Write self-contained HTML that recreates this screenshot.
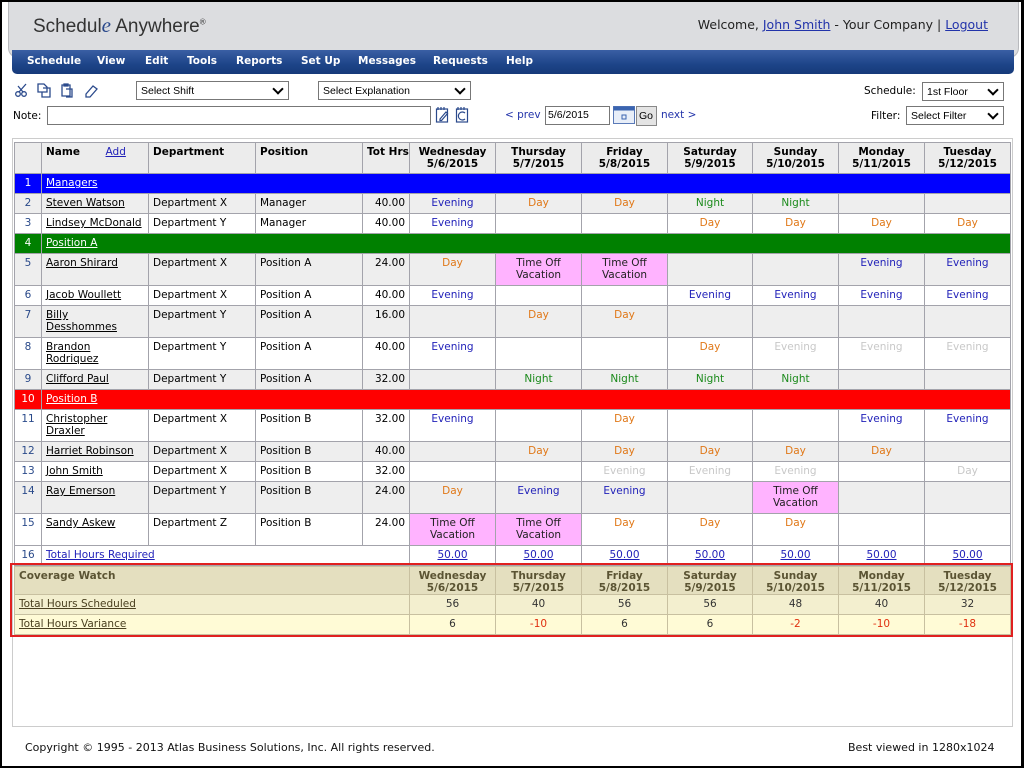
<!DOCTYPE html>
<html><head><meta charset="utf-8"><style>
*{box-sizing:border-box;margin:0;padding:0}
body{width:1024px;height:768px;background:#000;position:relative;overflow:hidden;font-family:"DejaVu Sans","Liberation Sans",sans-serif;font-size:10px;color:#000}
#page{position:absolute;left:2px;top:2px;width:1019px;height:764px;background:#fff}
#hdr{position:absolute;left:6px;top:0;width:1011px;height:56px;background:#dcdde0;border-radius:0 0 10px 10px;border:1px solid #b8b9bd;border-top:none}
#logo{position:absolute;left:24px;top:11px;font-family:"Liberation Sans",sans-serif;font-size:19px;color:#333}
#logo i{font-family:"Liberation Serif",serif;color:#2b4a8c;font-size:21px}
#logo sup{font-size:8px}
#welcome{position:absolute;right:30px;top:15px;font-family:"DejaVu Sans",sans-serif;font-size:12.5px;color:#222}
#welcome a{color:#2233aa}
#menu{position:absolute;left:10px;top:48px;width:1002px;height:24px;background:linear-gradient(#3a5fa4,#1d4488 60%,#163a7a);border-radius:0 0 5px 5px}
#menu span{position:absolute;top:5px;color:#fff;font-weight:bold;font-size:10.5px}
.sel{position:absolute;height:19px;border:1px solid #777;background:#fff;font-family:"Liberation Sans",sans-serif;font-size:10.5px;padding:3px 4px}
.sel.dd:after{content:"";position:absolute;right:6px;top:3px;width:6px;height:6px;border-right:2px solid #000;border-bottom:2px solid #000;transform:rotate(45deg)}
.lbl{position:absolute;font-size:10.5px}
a{color:#000;text-decoration:underline}
#grid{position:absolute;left:10px;top:136px;width:1001px;height:589px;border:1px solid #ccc}
table{border-collapse:collapse;table-layout:fixed;position:absolute}
td{border:1px solid #a3a3ab;vertical-align:top;padding:3px 4px 0;font-size:10.5px;line-height:12px;overflow:hidden;white-space:nowrap}
.g td{background:#eee}
.w td{background:#fff}
.n{color:#2a4a8a;text-align:center}
.r{text-align:right}
.c{text-align:center}
.hd td{background:#ececec;font-weight:bold}
.E{color:#1f1fb8}.D{color:#e07818}.N{color:#1b8a1b}.L{color:#c8c8c8}
.to{background:#ffb3ff!important;color:#222;text-align:center;white-space:normal}
.grp td{color:#fff}
.grp a{color:#fff}
.bl td{background:#0000ff}.gr td{background:#008000}.rd td{background:#ff0000}
.lk{color:#1f1fb8}
#cov td{border:1px solid #c8c0a0}
.ch td{background:#e4dfbf;color:#5b5433;font-weight:bold}
.c1 td{background:#f3efcf;color:#333}
.c2 td{background:#fffbd6;color:#333}
.neg{color:#e03010!important}
.c1 a,.c2 a{color:#4a4020}
.foot{position:absolute;top:739px;font-size:11px;color:#111}
</style></head><body><div id="page">
<div id="hdr"><div id="logo">Schedul<i>e</i> Anywhere<sup>®</sup></div>
<div id="welcome">Welcome, <a>John Smith</a> - Your Company | <a>Logout</a></div></div>
<div id="menu"><span style="left:15px">Schedule</span><span style="left:85px">View</span><span style="left:133px">Edit</span><span style="left:175px">Tools</span><span style="left:224px">Reports</span><span style="left:289px">Set Up</span><span style="left:346px">Messages</span><span style="left:421px">Requests</span><span style="left:494px">Help</span></div>
<svg style="position:absolute;left:12px;top:80px" width="90" height="16" viewBox="0 0 90 16" fill="none" stroke="#2b4a8c" stroke-width="1.3"><circle cx="4" cy="12" r="2.3"/><circle cx="10" cy="12" r="2.3"/><path d="M5 10 L12 2 M9 10 L4 4"/><path d="M24 2h6l3 3v5h-9zM29 6h7v9h-8v-5"/><path d="M48 3h8v11h-8zM50 2h4v2h-4zM52 7h6v8h-6"/><path d="M72 12l7-8 4 3-7 8h-4z"/></svg>
<div class="sel dd" style="left:134px;top:79px;width:153px">Select Shift</div>
<div class="sel dd" style="left:316px;top:79px;width:153px">Select Explanation</div>
<div class="lbl" style="left:11px;top:108px">Note:</div>
<div class="sel" style="left:45px;top:104px;width:384px;height:19px"></div>
<svg style="position:absolute;left:433px;top:104px" width="36" height="18" viewBox="0 0 36 18" fill="none" stroke="#2b4a8c" stroke-width="1.2"><rect x="1.5" y="3" width="11" height="13"/><path d="M3 1v3M6 1v3M9 1v3M5 13l6-7 1.5 1.5-6 7H5z"/><rect x="21.5" y="3" width="11" height="13"/><path d="M23 1v3M26 1v3M29 1v3M30 7a4 4 0 1 0 0 6"/></svg>
<div class="lbl" style="left:503px;top:107px;color:#2233aa">&lt; prev</div>
<div class="sel" style="left:543px;top:104px;width:65px;padding:2px 2px">5/6/2015</div>
<svg style="position:absolute;left:611px;top:104px" width="22" height="18" viewBox="0 0 22 18"><rect x="0.5" y="0.5" width="21" height="17" fill="#e8eef8" stroke="#5a7ab8"/><rect x="0.5" y="0.5" width="21" height="4" fill="#3a64b0"/><rect x="9" y="9" width="4" height="4" fill="none" stroke="#3a64b0"/></svg>
<div style="position:absolute;left:634px;top:104px;width:21px;height:20px;border:1px solid #888;background:#e4e4e4;font-family:'Liberation Sans';font-size:10.5px;padding:3px 2px">Go</div>
<div class="lbl" style="left:659px;top:107px;color:#2233aa">next &gt;</div>
<div class="lbl" style="left:862px;top:83px">Schedule:</div>
<div class="sel dd" style="left:920px;top:80px;width:82px">1st Floor</div>
<div class="lbl" style="left:869px;top:108px">Filter:</div>
<div class="sel dd" style="left:904px;top:104px;width:98px">Select Filter</div>
<div id="grid">
<table style="left:1px;top:3px;width:996px">
<colgroup><col style="width:27px"><col style="width:107px"><col style="width:107px"><col style="width:107px"><col style="width:47px"><col style="width:86px"><col style="width:86px"><col style="width:86px"><col style="width:85px"><col style="width:86px"><col style="width:86px"><col style="width:86px"></colgroup>
<tr class="hd" style="height:31px"><td></td><td>Name &nbsp;&nbsp;&nbsp;&nbsp;&nbsp;&nbsp;<a class="lk" style="font-weight:normal">Add</a></td><td>Department</td><td>Position</td><td>Tot Hrs</td><td class="c">Wednesday<br>5/6/2015</td><td class="c">Thursday<br>5/7/2015</td><td class="c">Friday<br>5/8/2015</td><td class="c">Saturday<br>5/9/2015</td><td class="c">Sunday<br>5/10/2015</td><td class="c">Monday<br>5/11/2015</td><td class="c">Tuesday<br>5/12/2015</td></tr>
<tr class="grp bl" style="height:20px"><td class="c">1</td><td colspan="11"><a>Managers</a></td></tr>
<tr class="g" style="height:20px"><td class="n">2</td><td><a>Steven Watson</a></td><td>Department X</td><td>Manager</td><td class="r">40.00</td><td class="c E">Evening</td><td class="c D">Day</td><td class="c D">Day</td><td class="c N">Night</td><td class="c N">Night</td><td></td><td></td></tr>
<tr class="w" style="height:20px"><td class="n">3</td><td><a>Lindsey McDonald</a></td><td>Department Y</td><td>Manager</td><td class="r">40.00</td><td class="c E">Evening</td><td></td><td></td><td class="c D">Day</td><td class="c D">Day</td><td class="c D">Day</td><td class="c D">Day</td></tr>
<tr class="grp gr" style="height:20px"><td class="c">4</td><td colspan="11"><a>Position A</a></td></tr>
<tr class="g" style="height:32px"><td class="n">5</td><td><a>Aaron Shirard</a></td><td>Department X</td><td>Position A</td><td class="r">24.00</td><td class="c D">Day</td><td class="to">Time Off<br>Vacation</td><td class="to">Time Off<br>Vacation</td><td></td><td></td><td class="c E">Evening</td><td class="c E">Evening</td></tr>
<tr class="w" style="height:20px"><td class="n">6</td><td><a>Jacob Woullett</a></td><td>Department X</td><td>Position A</td><td class="r">40.00</td><td class="c E">Evening</td><td></td><td></td><td class="c E">Evening</td><td class="c E">Evening</td><td class="c E">Evening</td><td class="c E">Evening</td></tr>
<tr class="g" style="height:32px"><td class="n">7</td><td><a>Billy<br>Desshommes</a></td><td>Department Y</td><td>Position A</td><td class="r">16.00</td><td></td><td class="c D">Day</td><td class="c D">Day</td><td></td><td></td><td></td><td></td></tr>
<tr class="w" style="height:32px"><td class="n">8</td><td><a>Brandon<br>Rodriquez</a></td><td>Department Y</td><td>Position A</td><td class="r">40.00</td><td class="c E">Evening</td><td></td><td></td><td class="c D">Day</td><td class="c L">Evening</td><td class="c L">Evening</td><td class="c L">Evening</td></tr>
<tr class="g" style="height:20px"><td class="n">9</td><td><a>Clifford Paul</a></td><td>Department Y</td><td>Position A</td><td class="r">32.00</td><td></td><td class="c N">Night</td><td class="c N">Night</td><td class="c N">Night</td><td class="c N">Night</td><td></td><td></td></tr>
<tr class="grp rd" style="height:20px"><td class="c">10</td><td colspan="11"><a>Position B</a></td></tr>
<tr class="w" style="height:32px"><td class="n">11</td><td><a>Christopher<br>Draxler</a></td><td>Department X</td><td>Position B</td><td class="r">32.00</td><td class="c E">Evening</td><td></td><td class="c D">Day</td><td></td><td></td><td class="c E">Evening</td><td class="c E">Evening</td></tr>
<tr class="g" style="height:20px"><td class="n">12</td><td><a>Harriet Robinson</a></td><td>Department X</td><td>Position B</td><td class="r">40.00</td><td></td><td class="c D">Day</td><td class="c D">Day</td><td class="c D">Day</td><td class="c D">Day</td><td class="c D">Day</td><td></td></tr>
<tr class="w" style="height:20px"><td class="n">13</td><td><a>John Smith</a></td><td>Department X</td><td>Position B</td><td class="r">32.00</td><td></td><td></td><td class="c L">Evening</td><td class="c L">Evening</td><td class="c L">Evening</td><td></td><td class="c L">Day</td></tr>
<tr class="g" style="height:32px"><td class="n">14</td><td><a>Ray Emerson</a></td><td>Department Y</td><td>Position B</td><td class="r">24.00</td><td class="c D">Day</td><td class="c E">Evening</td><td class="c E">Evening</td><td></td><td class="to">Time Off<br>Vacation</td><td></td><td></td></tr>
<tr class="w" style="height:32px"><td class="n">15</td><td><a>Sandy Askew</a></td><td>Department Z</td><td>Position B</td><td class="r">24.00</td><td class="to">Time Off<br>Vacation</td><td class="to">Time Off<br>Vacation</td><td class="c D">Day</td><td class="c D">Day</td><td class="c D">Day</td><td></td><td></td></tr>
<tr class="w" style="height:20px"><td class="n">16</td><td colspan="4"><a class="lk">Total Hours Required</a></td><td class="c"><a class="lk">50.00</a></td><td class="c"><a class="lk">50.00</a></td><td class="c"><a class="lk">50.00</a></td><td class="c"><a class="lk">50.00</a></td><td class="c"><a class="lk">50.00</a></td><td class="c"><a class="lk">50.00</a></td><td class="c"><a class="lk">50.00</a></td></tr>
</table>
<div style="position:absolute;left:-3px;top:424px;width:1003px;height:74px;border:2px solid #e02020"></div>
<table id="cov" style="left:1px;top:427px;width:996px">
<colgroup><col style="width:395px"><col style="width:86px"><col style="width:86px"><col style="width:86px"><col style="width:85px"><col style="width:86px"><col style="width:86px"><col style="width:86px"></colgroup>
<tr class="ch" style="height:27px"><td>Coverage Watch</td><td class="c">Wednesday<br>5/6/2015</td><td class="c">Thursday<br>5/7/2015</td><td class="c">Friday<br>5/8/2015</td><td class="c">Saturday<br>5/9/2015</td><td class="c">Sunday<br>5/10/2015</td><td class="c">Monday<br>5/11/2015</td><td class="c">Tuesday<br>5/12/2015</td></tr>
<tr class="c1" style="height:20px"><td><a>Total Hours Scheduled</a></td><td class="c">56</td><td class="c">40</td><td class="c">56</td><td class="c">56</td><td class="c">48</td><td class="c">40</td><td class="c">32</td></tr>
<tr class="c2" style="height:20px"><td><a>Total Hours Variance</a></td><td class="c">6</td><td class="c neg">-10</td><td class="c">6</td><td class="c">6</td><td class="c neg">-2</td><td class="c neg">-10</td><td class="c neg">-18</td></tr>
</table>
</div>
<div class="foot" style="left:23px">Copyright © 1995 - 2013 Atlas Business Solutions, Inc. All rights reserved.</div>
<div class="foot" style="left:846px">Best viewed in 1280x1024</div>
</div></body></html>
